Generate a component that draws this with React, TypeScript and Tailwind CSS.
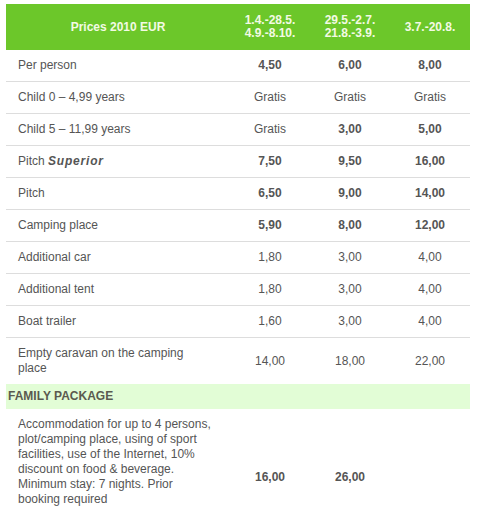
import type { ReactNode } from "react";

type PriceRow = {
  label: ReactNode;
  values: string[];
  bold?: boolean;
};

const rows: PriceRow[] = [
  { label: "Per person", values: ["4,50", "6,00", "8,00"], bold: true },
  { label: "Child 0 – 4,99 years", values: ["Gratis", "Gratis", "Gratis"] },
  { label: "Child 5 – 11,99 years", values: ["Gratis", "3,00", "5,00"], bold: true },
  {
    label: (
      <>
        Pitch <b className="italic tracking-[0.8px]">Superior</b>
      </>
    ),
    values: ["7,50", "9,50", "16,00"],
    bold: true,
  },
  { label: "Pitch", values: ["6,50", "9,00", "14,00"], bold: true },
  { label: "Camping place", values: ["5,90", "8,00", "12,00"], bold: true },
  { label: "Additional car", values: ["1,80", "3,00", "4,00"] },
  { label: "Additional tent", values: ["1,80", "3,00", "4,00"] },
  { label: "Boat trailer", values: ["1,60", "3,00", "4,00"] },
  { label: "Empty caravan on the camping place", values: ["14,00", "18,00", "22,00"] },
];

const seasons = [
  ["1.4.-28.5.", "4.9.-8.10."],
  ["29.5.-2.7.", "21.8.-3.9."],
  ["3.7.-20.8."],
];

export default function App() {
  return (
    <div className="h-[530px] overflow-hidden bg-white pl-[6px] pt-[4px] font-['Liberation_Sans',Arial,sans-serif] text-[12px] leading-[15px] text-[#555555]">
      <table className="w-[464px] table-fixed border-collapse">
        <colgroup>
          <col className="w-[224px]" />
          <col className="w-[80px]" />
          <col className="w-[80px]" />
          <col className="w-[80px]" />
        </colgroup>
        <thead>
          <tr className="h-[46px] bg-[#6cc72a] font-bold text-[#f3fae4]">
            <th className="text-center align-middle">Prices 2010 EUR</th>
            {seasons.map((lines, i) => (
              <th key={i} className="text-center align-middle leading-[13px]">
                {lines.map((line) => (
                  <div key={line}>{line}</div>
                ))}
              </th>
            ))}
          </tr>
        </thead>
        <tbody>
          {rows.map((row, i) => (
            <tr key={i} className={i === rows.length - 1 ? "" : "border-b border-[#dddddd]"}>
              <td className="py-2 pl-[12px] pr-[17px] align-middle">{row.label}</td>
              {row.values.map((value, j) => (
                <td
                  key={j}
                  className={`py-2 text-center align-middle ${
                    row.bold && value !== "Gratis" ? "font-bold" : ""
                  }`}
                >
                  {value}
                </td>
              ))}
            </tr>
          ))}
          <tr className="h-[25px] bg-[#e2fdd6]">
            <td colSpan={4} className="pl-[2px] align-middle font-bold text-[#5a5a4f]">
              FAMILY PACKAGE
            </td>
          </tr>
          <tr>
            <td className="pt-2 pb-[38px] pl-[12px] pr-[17px] align-top">
              Accommodation for up to 4 persons, plot/camping place, using of sport facilities, use
              of the Internet, 10% discount on food &amp; beverage. Minimum stay: 7 nights. Prior
              booking required
            </td>
            <td className="text-center align-middle font-bold">16,00</td>
            <td className="text-center align-middle font-bold">26,00</td>
            <td />
          </tr>
        </tbody>
      </table>
    </div>
  );
}
